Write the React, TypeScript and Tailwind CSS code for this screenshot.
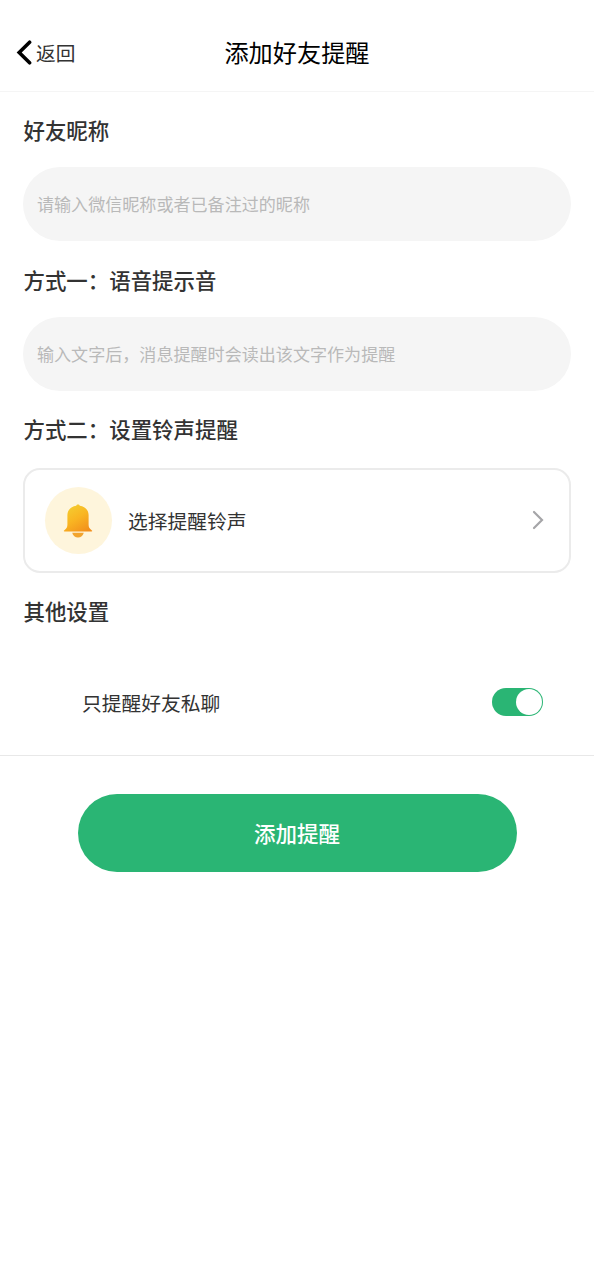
import { useState, type ReactNode } from "react";

function SectionTitle({ children }: { children: ReactNode }) {
  return (
    <h2 className="flex h-8 items-center pb-0.5 pl-[0.5px] text-[21.45px] font-medium whitespace-nowrap text-[#333333]">
      {children}
    </h2>
  );
}

function TextField({ placeholder }: { placeholder: string }) {
  return (
    <input
      type="text"
      placeholder={placeholder}
      className="block h-[74px] w-full rounded-full bg-[#f5f5f5] px-3.5 pb-0.5 text-[17.07px] text-[#333333] outline-none placeholder:text-[#b9b9b9]"
    />
  );
}

function BackIcon() {
  return (
    <svg width="16" height="26" viewBox="0 0 16 26" fill="none">
      <path d="M13.6 2.2 3.2 12.5l10.4 10.3" stroke="#000" strokeWidth="3.6" strokeLinecap="round" strokeLinejoin="miter" />
    </svg>
  );
}

function BellIcon() {
  return (
    <svg width="30" height="34" viewBox="0 0 30 34">
      <defs>
        <linearGradient id="bell" x1="0.15" y1="0" x2="0.8" y2="1">
          <stop offset="0" stopColor="#f4cf32" />
          <stop offset="0.5" stopColor="#f9b522" />
          <stop offset="1" stopColor="#f28f1c" />
        </linearGradient>
      </defs>
      <path
        d="M15 0.5c.9 0 1.5.5 1.8 1.2C22 2.5 25.6 6 25.6 11v9.4c0 2.5.7 4 3.3 6 .6.5.4 1.1-.4 1.1H1.5c-.8 0-1-.6-.4-1.1 2.6-2 3.3-3.5 3.3-6V11c0-5 3.6-8.5 8.8-9.300.3-.7.9-1.200 1.800-1.200z"
        fill="url(#bell)"
      />
      <path d="M9.2 28.7h11.6c-.8 3-2.9 4.8-5.8 4.8s-5-1.8-5.8-4.8z" fill="#f2a42e" />
    </svg>
  );
}

function Switch() {
  const [on, setOn] = useState(true);
  return (
    <button
      type="button"
      role="switch"
      aria-checked={on}
      onClick={() => setOn(!on)}
      className={`flex h-7 w-[51px] items-center rounded-full px-px ${on ? "justify-end bg-[#2ab574]" : "justify-start bg-[#dddddd]"}`}
    >
      <span className="size-[26px] rounded-full bg-white" />
    </button>
  );
}

export default function App() {
  return (
    <div className="min-h-screen w-full bg-white font-['Noto_Sans_CJK_SC',sans-serif]">
      <header className="grid h-[92px] grid-cols-[1fr_auto_1fr] items-center border-b border-[#f5f5f5] pt-[14px]">
        <button type="button" className="flex items-center gap-1 pl-4 text-[19.7px] leading-8 text-[#333333]">
          <BackIcon />
          返回
        </button>
        <h1 className="pb-px text-[24.2px] leading-9 font-normal text-black">添加好友提醒</h1>
      </header>

      <main>
        <div className="flex flex-col px-[23px] pt-[23px]">
          <SectionTitle>好友昵称</SectionTitle>
          <div className="pt-5 pb-6">
            <TextField placeholder="请输入微信昵称或者已备注过的昵称" />
          </div>
          <SectionTitle>方式一：语音提示音</SectionTitle>
          <div className="pt-5 pb-[23px]">
            <TextField placeholder="输入文字后，消息提醒时会读出该文字作为提醒" />
          </div>
          <SectionTitle>方式二：设置铃声提醒</SectionTitle>
          <div className="pt-[22px] pb-[23px]">
            <button
              type="button"
              className="flex h-[105px] w-full items-center rounded-[17px] border-2 border-[#ebebeb] pr-[25px] pb-px pl-5 text-left"
            >
              <span className="flex size-[67px] items-center justify-center rounded-full bg-[#fef5dc] pt-px pr-px">
                <BellIcon />
              </span>
              <span className="flex-1 pt-0.5 pl-4 text-[19.75px] text-[#333333]">选择提醒铃声</span>
              <svg width="12" height="20" viewBox="0 0 12 20" fill="none">
                <path d="m2 2 8 8-8 8" stroke="#a5a5a8" strokeWidth="2.2" strokeLinecap="round" />
              </svg>
            </button>
          </div>
          <SectionTitle>其他设置</SectionTitle>
        </div>

        <div className="mt-[21px] flex h-[107px] items-center justify-between border-b border-[#e8e8e8] pr-[51px] pl-[82px]">
          <span className="pt-0.5 text-[19.75px] text-[#333333]">只提醒好友私聊</span>
          <Switch />
        </div>

        <div className="px-[77.5px] pt-[38px]">
          <button type="button" className="h-[78px] w-full rounded-full bg-[#2ab574] text-[21.5px] font-medium text-white">
            添加提醒
          </button>
        </div>
      </main>
    </div>
  );
}
